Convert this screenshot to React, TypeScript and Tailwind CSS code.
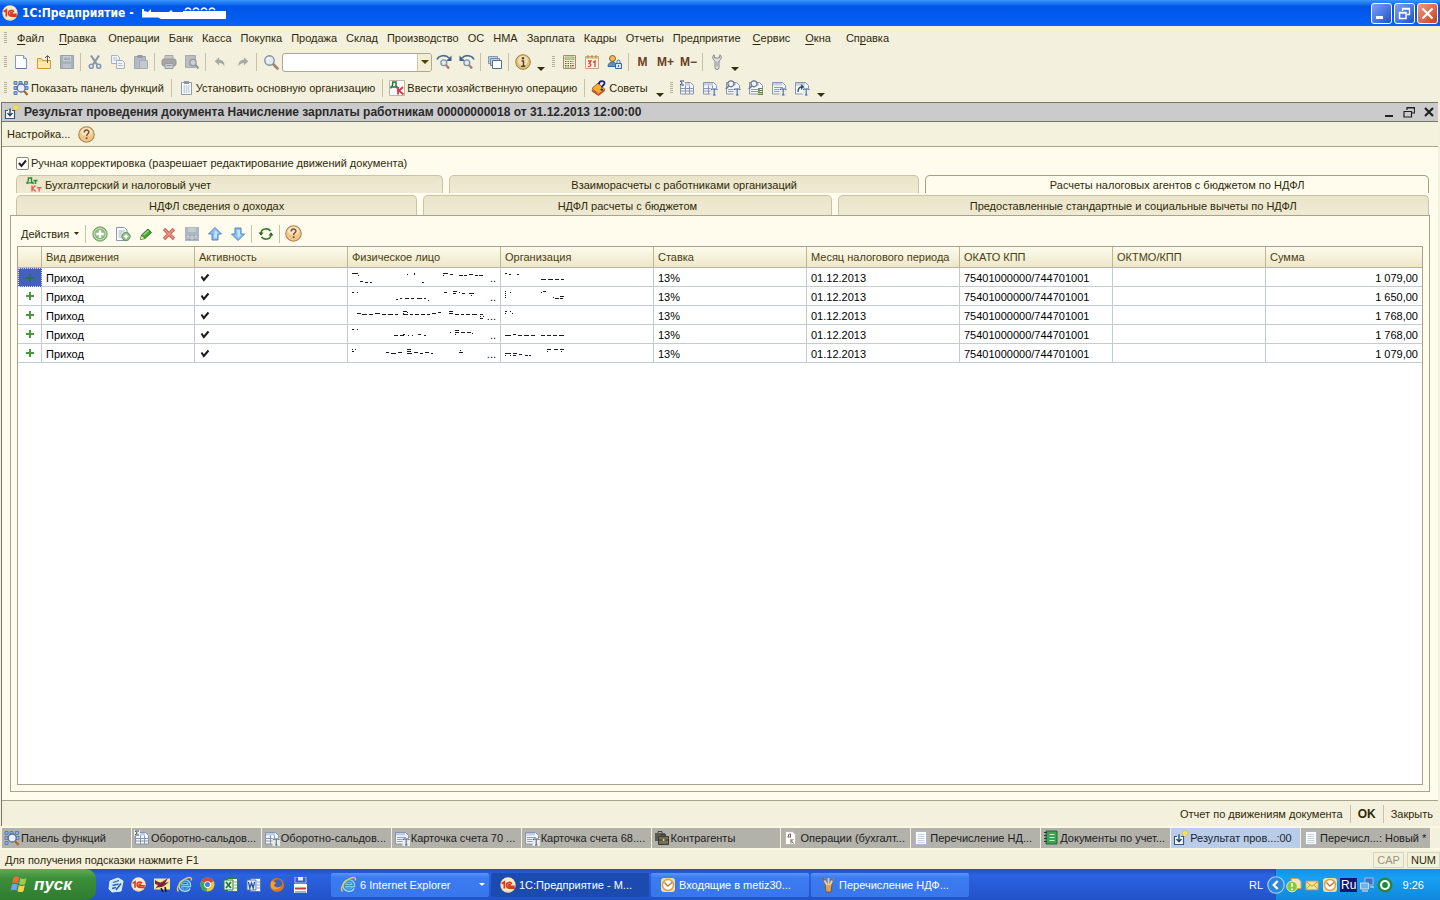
import React from "react";

type Kids = { children?: React.ReactNode };

/* ---------- icon building blocks ---------- */

const Ico = ({ children, size = 16 }: Kids & { size?: number }) => (
  <svg width={size} height={size} viewBox="0 0 16 16" fill="none" aria-hidden="true" className="shrink-0">
    {children}
  </svg>
);

const NewDoc = () => (
  <Ico>
    <path d="M2.500 1.500h8l3 3v10h-11z" fill="#fbfdff" stroke="#8a9bb5" />
    <path d="M10.500 1.500v3h3" fill="#dfe8f3" stroke="#8a9bb5" />
    <path d="M3 14.500h10.500" stroke="#5f7596" />
  </Ico>
);
const OpenFolder = () => (
  <Ico>
    <path d="M1.500 4.500h4l1 2h8v8h-13z" fill="#f9d98a" stroke="#c79a3c" />
    <path d="M2 8h12v6H2z" fill="#ffe9ae" />
    <path d="M11.500 9V2M9 4l2.500-2.500L14 4" stroke="#5f5a4a" />
  </Ico>
);
const Floppy = () => (
  <Ico>
    <path d="M1.500 1.500h13v13h-13z" fill="#a9b2bb" stroke="#98a2ac" />
    <path d="M4 2h8v5H4z" fill="#c9cfd4" />
    <path d="M4 10h8v4H4z" fill="#bcc4cb" />
    <path d="M5 4h6M5 5.500h6" stroke="#98a2ac" />
  </Ico>
);
const Scissors = () => (
  <Ico>
    <path d="M4 1.500l6 9M12 1.500l-6 9" stroke="#8b97a6" strokeWidth="2.200" />
    <circle cx="4.300" cy="12.300" r="2" stroke="#8496b5" strokeWidth="1.600" />
    <circle cx="11.700" cy="12.300" r="2" stroke="#8496b5" strokeWidth="1.600" />
  </Ico>
);
const CopyIco = () => (
  <Ico>
    <path d="M1.500 1.500h6l2 2v6h-8z" fill="#f2f4f6" stroke="#a5b3c4" />
    <path d="M3 4h4M3 6h5" stroke="#b4c0ce" />
    <path d="M6.500 6.500h6l2 2v6h-8z" fill="#f2f4f6" stroke="#a5b3c4" />
    <path d="M8 9.500h4M8 11.500h5" stroke="#b4c0ce" />
  </Ico>
);
const PasteIco = () => (
  <Ico>
    <path d="M1.500 2.500h11v12h-11z" fill="#b3bac1" stroke="#9ea7b0" />
    <path d="M4.500 1h5v3h-5z" fill="#9099a3" />
    <path d="M6.500 6.500h8v8h-8z" fill="#c3c9ce" stroke="#a4adb6" />
  </Ico>
);
const Printer = () => (
  <Ico>
    <path d="M4 1.500h8v5H4z" fill="#c9c9c9" stroke="#a9a9a9" />
    <rect x="1" y="5" width="14" height="7" rx="2" fill="#a6a6a8" stroke="#96969a" />
    <path d="M4 9.500h8v5H4z" fill="#cdcdcd" stroke="#9b9b9b" />
    <path d="M5.500 11.500h5" stroke="#9b9b9b" />
  </Ico>
);
const Preview = () => (
  <Ico>
    <path d="M1.500 1.500h10v12h-10z" fill="#bbbdc0" stroke="#a6a9ad" />
    <circle cx="9" cy="8.500" r="3.200" fill="#cfd1d4" stroke="#94989e" strokeWidth="1.300" />
    <path d="M11.500 11l3 3.500" stroke="#94989e" strokeWidth="2" />
  </Ico>
);
const Undo = () => (
  <Ico size={14}>
    <path d="M2 7l5-4.500v3c4 0 6.500 2.500 6 7.500-1.500-3-3-4-6-4v3z" fill="#a8a8a4" />
  </Ico>
);
const Redo = () => (
  <Ico size={14}>
    <path d="M14 7L9 2.500v3c-4 0-6.500 2.500-6 7.500 1.500-3 3-4 6-4v3z" fill="#a8a8a4" />
  </Ico>
);
const Magnifier = () => (
  <Ico>
    <path d="M10 10l4.500 4.500" stroke="#a87e73" strokeWidth="2.600" strokeLinecap="round" />
    <circle cx="6.500" cy="6.500" r="4.700" fill="#e3ecf4" stroke="#8590a0" strokeWidth="1.400" />
    <path d="M4 6a3 3 0 013-2" stroke="#fff" strokeWidth="1.200" />
  </Ico>
);
const FindNext = ({ back = false }: { back?: boolean }) => (
  <Ico>
    <g transform={back ? "matrix(-1 0 0 1 16 0)" : undefined}>
      <path d="M1 5.500C3 1 10 .5 13 4" stroke="#4d6f8f" strokeWidth="1.700" />
      <path d="M15.500 1.500v5.500H10z" fill="#3f6385" />
    </g>
    <path d="M10 11l3 3.500" stroke="#a87e73" strokeWidth="2.400" />
    <circle cx="7.800" cy="8.800" r="2.900" fill="#e3ecf4" stroke="#8590a0" strokeWidth="1.300" />
  </Ico>
);
const Windows = () => (
  <Ico>
    <path d="M1.500 2.500h9v7h-9z" fill="#c3d2e4" stroke="#7f98b8" />
    <path d="M3.500 4.500h9v7h-9z" fill="#c3d2e4" stroke="#6d87a8" />
    <path d="M5.500 6.500h9v8h-9z" fill="#fff" stroke="#4c6d97" />
  </Ico>
);
const InfoIco = () => (
  <Ico>
    <circle cx="8" cy="8" r="7.300" fill="#e3c07a" stroke="#9d7f45" />
    <circle cx="8" cy="6.800" r="5" fill="#f8e9c0" opacity=".7" />
    <path d="M6.500 7h2v5M6.200 12.200h4" stroke="#4d4636" strokeWidth="1.400" />
    <circle cx="8" cy="4.200" r="1.200" fill="#4d4636" />
  </Ico>
);
const Calc = () => (
  <Ico>
    <path d="M2.500 1.500h12v13h-12z" fill="#f6ecd0" stroke="#a58e62" />
    <path d="M4 3h9v2.500H4z" fill="#b9d79b" stroke="#7f9a60" strokeWidth=".6" />
    <path d="M4 7.500h8.500M4 9.500h8.500M4 11.500h8.500M4 13h8.500" stroke="#69704a" strokeWidth="1.200" strokeDasharray="1.500 1" />
    <path d="M11 11.500h1.500" stroke="#c33" />
  </Ico>
);
const CalendarIco = () => (
  <Ico>
    <path d="M1.500 2.500h13v12h-13z" fill="#fff4e0" stroke="#c9a577" />
    <path d="M2 3h12v2H2z" fill="#ecc794" />
    <path d="M4 1v3M8 1v3M12 1v3" stroke="#a97f55" />
    <path d="M4 7h3L5.200 9.500c2.500 0 2.300 3.500-1.400 3.200M9 8.500l2-1.500v6" stroke="#d8433a" strokeWidth="1.300" />
  </Ico>
);
const UserLock = () => (
  <Ico>
    <circle cx="5.500" cy="4.500" r="3" fill="#eeb95d" stroke="#80622e" />
    <path d="M1 12.500c0-3 2-4.500 4.500-4.500s4 1.500 4 4.500z" fill="#5d8fc9" stroke="#3e6797" />
    <path d="M8.500 9.500h6v5h-6z" fill="#dbe7f5" stroke="#3e6797" />
    <path d="M10 9V7.500a1.500 1.500 0 013 0V9" stroke="#3e6797" />
    <path d="M11.500 11v2" stroke="#3e6797" />
  </Ico>
);
const Wrench = () => (
  <Ico>
    <path
      d="M5 .8c-2 1.800-1.500 4.800 1 6v6.700a2 2 0 004 0V6.800c2.500-1.200 3-4.200 1-6L10.200 4H5.800z"
      fill="#e2e2e2"
      stroke="#858585"
    />
    <path d="M8 7.500v5" stroke="#8d8d8d" />
  </Ico>
);
const PanelFn = () => (
  <Ico>
    <path
      d="M1 1.500h3v3H1zM6 1.500h3v3H6zM11.500 1.500h3v3h-3zM1 6.500h3v3H1zM1 11.500h3v3H1zM12 6.500h3v3h-3z"
      fill="#8eb0df"
      stroke="#5a80b8"
    />
    <circle cx="8.200" cy="8" r="4" fill="#e6f0fb" stroke="#5b6f92" strokeWidth="1.300" />
    <path d="M11 11l3.500 4" stroke="#a8663a" strokeWidth="2.200" />
  </Ico>
);
const OrgIco = () => (
  <Ico>
    <path d="M3.500 2.500h10v12h-10z" fill="#fbfcfe" stroke="#8c99b0" />
    <path d="M6 1h5v3H6z" fill="#8a97ac" />
    <path d="M5.500 6h6M5.500 8h6M5.500 10h6M5.500 12h6" stroke="#8fa2be" strokeDasharray="1.500 .8" />
  </Ico>
);
const DkIco = () => (
  <Ico>
    <path d="M.5.500h15v15H.500z" fill="#fff" stroke="#bdb7a1" />
    <path d="M2 8.500V7h.8c.9-1.500 1-3 1-5H7v5h1v1.500M3 7h4" stroke="#22773c" strokeWidth="1.500" />
    <path d="M9 7v7.500M14 7l-4 3.800 4.500 3.700" stroke="#d8344a" strokeWidth="1.800" />
  </Ico>
);
const TipsIco = () => (
  <Ico>
    <path d="M1 8.500l6-5.500 7 6.500L7.500 14z" fill="#f6ab33" stroke="#a25d12" />
    <path d="M.8 9v2.500L7.500 16l6.500-5v-1.500L7.500 14.200z" fill="#c4532b" />
    <path d="M8 4.200C8 .3 13.500.3 13.500 3.200c0 2.200-2.700 2-2.700 4.300" stroke="#1e1f8d" strokeWidth="1.900" />
    <circle cx="10.800" cy="9.600" r="1.200" fill="#1e1f8d" />
  </Ico>
);
const SheetBase = () => (
  <>
    <path d="M1.500 2.500h10l3 3v8.500h-13z" fill="#f4f6fb" stroke="#8795b2" />
    <path d="M2 3h9v2.500H2z" fill="#c3cee2" />
  </>
);
const LetterT = () => (
  <>
    <path d="M8.500 8H16v8H8.500z" fill="#eeece2" />
    <path d="M9.500 10V9h5.500v1M12.200 9v6M11 15h2.500" stroke="#3a6298" />
  </>
);
const SigmaSheet = () => (
  <Ico>
    <SheetBase />
    <path d="M6.500 5.500v8.500M10.500 5.500v8.500M2 8.500h12M2 11h12" stroke="#8795b2" />
    <path d="M0 0h6v6H0z" fill="#efeddf" />
    <path d="M5 1H1.200L3.200 3 1.200 5H5" stroke="#2e4f7c" />
  </Ico>
);
const TableT = () => (
  <Ico>
    <SheetBase />
    <path d="M6.500 5.500v8.500M10.500 5.500v8.500M2 8.500h12M2 11h12" stroke="#8795b2" />
    <LetterT />
  </Ico>
);
const LinesT = () => (
  <Ico>
    <SheetBase />
    <path d="M3 7.500h9M3 9.500h9M3 11.500h9" stroke="#8a9dbb" />
    <LetterT />
  </Ico>
);
const LensT = ({ plain = false }: { plain?: boolean }) => (
  <Ico>
    <SheetBase />
    <path d="M3 9.500h9M3 11.500h9" stroke="#8a9dbb" />
    {plain ? <path d="M10 8.500h5M10 10.500h5M10 12.500h5M10 14.500h5" stroke="#6d8068" /> : <LetterT />}
    <circle cx="6" cy="3.800" r="3" fill="#edf3f8" stroke="#6d7787" strokeWidth="1.200" />
    <path d="M3.800 6L.8 9" stroke="#6d7787" strokeWidth="1.600" />
  </Ico>
);
const ArrowT = () => (
  <Ico>
    <SheetBase />
    <path d="M4 12c0-4 2-5 4-5" stroke="#35506f" strokeWidth="1.300" />
    <path d="M7 4l3.500 3L7 10z" fill="#35506f" />
    <LetterT />
  </Ico>
);
const ResultIco = () => (
  <Ico>
    <path d="M4 6.500H1.500v8h9v-8H8" fill="#fff" stroke="#35577d" strokeWidth="1.200" />
    <path d="M6 4.500v6.500M3.500 9L6 11.800 8.500 9" stroke="#24466d" strokeWidth="1.400" />
    <path d="M12 0l3.500 3.500L12 7 8.500 3.500z" fill="#f3dc63" stroke="#d3bb50" strokeWidth=".7" />
  </Ico>
);
const HelpIco = () => (
  <Ico size={17}>
    <circle cx="8" cy="8" r="7.300" fill="#f3c68c" stroke="#ad8450" />
    <ellipse cx="8" cy="5.500" rx="5.500" ry="3.800" fill="#fdebd0" opacity=".8" />
    <path d="M5.900 6c0-2.800 4.400-2.800 4.400-.3 0 1.700-2.200 1.700-2.200 3.600" stroke="#7b5a32" strokeWidth="1.400" />
    <circle cx="8.100" cy="11.500" r="1" fill="#7b5a32" />
  </Ico>
);
const AddIco = () => (
  <Ico>
    <circle cx="8" cy="8" r="7.200" fill="#8fbb84" stroke="#76a06c" />
    <circle cx="8" cy="8" r="5.800" stroke="#c4dfb8" />
    <path d="M8 4.200v7.600M4.200 8h7.600" stroke="#fff" strokeWidth="2.400" />
  </Ico>
);
const AddCopy = () => (
  <Ico>
    <path d="M1.500 1.500h8l2.500 2.500v10.500H1.500z" fill="#f8fbff" stroke="#8598b5" />
    <path d="M3.500 5h6M3.500 7h4M3.500 9h3M3.500 11h3" stroke="#a3b4cc" />
    <circle cx="11" cy="10.500" r="4.200" fill="#8fbb84" stroke="#6b955f" />
    <path d="M11 8.200v4.600M8.700 10.500h4.600" stroke="#fff" strokeWidth="1.500" />
  </Ico>
);
const Pencil = () => (
  <Ico>
    <path d="M2.500 13.500l1-4.500 6.500-6 3.500 3.500-6.500 6z" fill="#4ba53a" stroke="#2b7323" />
    <path d="M2.500 13.500l1-3.500 2.800 2.500z" fill="#f4e5b8" />
    <path d="M5.500 9l5-4.500" stroke="#9bdb86" strokeWidth="1.300" />
  </Ico>
);
const DeleteIco = () => (
  <Ico>
    <path d="M3 3l10 10M13 3L3 13" stroke="#cf5d50" strokeWidth="3.200" />
    <path d="M3.500 3.500l9 9M12.500 3.500l-9 9" stroke="#f09a8c" strokeWidth="1.200" />
  </Ico>
);
const PostIco = () => (
  <Ico>
    <path d="M1 1h14v14H1z" fill="#aeb6c0" />
    <path d="M4 2h8v4H4z" fill="#c6ccd3" />
    <path d="M2 9h12v5H2z" fill="#98a3b0" />
    <path d="M3 13v-3h2v3M7 10h2v3H7zM11 13v-3h2v3" stroke="#dde1e6" strokeWidth=".9" />
  </Ico>
);
const ArrowBlue = ({ down = false }: { down?: boolean }) => (
  <Ico>
    <g transform={down ? "matrix(1 0 0 -1 0 16)" : undefined}>
      <path d="M8 1.500l6.500 6.500H11v6H5V8H1.500z" fill="#8ec0ec" stroke="#4b86bc" />
      <path d="M8 4l3.500 3.500H10V12H7z" fill="#c4e2fa" />
    </g>
  </Ico>
);
const Refresh = () => (
  <Ico>
    <path d="M3 7c.5-4.500 7-5.500 9.500-2M13 9c-.5 4.500-7 5.500-9.500 2" stroke="#3d7b32" strokeWidth="1.700" />
    <path d="M.5 6.500h5L3 9.800zM15.500 9.500h-5L13 6.200z" fill="#2d6425" />
  </Ico>
);
const DtKt = () => (
  <svg width="16" height="15" viewBox="0 0 16 15" fill="none" aria-hidden="true" className="shrink-0">
    <path d="M1 7V5.700c1-.8 1.500-2 1.500-4.700h3v4.500H7V7M1 5.900h6M4 1h2" stroke="#2c8a35" strokeWidth="1.400" />
    <path d="M7.500 3.500h4M9.500 3.500V7" stroke="#2c8a35" strokeWidth="1.500" />
    <path d="M6 8.500v6M9.500 8.500l-3 3 3.300 3M10.800 10.700h4.700M13.200 10.700v3.800" stroke="#e0685e" strokeWidth="1.500" />
  </svg>
);
const Case = () => (
  <Ico>
    <path d="M1 3h10v8H1z" fill="#5c5a4c" />
    <path d="M4 3V1.500h4V3" stroke="#45443a" />
    <path d="M4.500 6.500h10v8h-10z" fill="#726f5b" stroke="#3f3d33" />
    <path d="M7.500 6V4.500h4V6M5 10h9" stroke="#3f3d33" />
    <path d="M8.800 9h1.600v2H8.800z" fill="#d9cf92" />
  </Ico>
);
const DkDoc = () => (
  <Ico>
    <path d="M2.500 1.500h7l3 3v10h-10z" fill="#fff" stroke="#b9b9b0" />
    <path d="M5 7l1-3h1.500v3M4.500 7H8M8 9v4.500M10.500 9L8.500 11l2 2.500" stroke="#8a5a50" />
  </Ico>
);
const LinesDoc = () => (
  <Ico>
    <path d="M2.500 1.500h11v13h-11z" fill="#fff" stroke="#a9b7cc" />
    <path d="M4.500 4.500h7M4.500 6.500h7M4.500 8.500h7M4.500 10.500h7M4.500 12.500h7" stroke="#c3cfe0" />
  </Ico>
);
const GreenBook = () => (
  <Ico>
    <path d="M3 1h11v13H3z" fill="#3fa256" stroke="#1f6a35" />
    <path d="M1 2.500h3M1 5.500h3M1 8.500h3M1 11.500h3" stroke="#333" />
    <path d="M6.500 4.500h5M6.500 7.500h5M6.500 10.500h5" stroke="#c7ecd0" />
  </Ico>
);
const OneC = ({ size = 16 }: { size?: number }) => (
  <Ico size={size}>
    <circle cx="8" cy="8" r="7.700" fill="#f9dcae" />
    <circle cx="8" cy="7.500" r="6.500" fill="#fdeccb" />
    <path
      d="M1.800 6.800L4.300 5v6.500M11.800 6.800c-1-2-5.300-1.800-5.300 1.300 0 2.700 2.200 3.100 3.800 3.100h4.500M10.800 8.200c-.9-.9-2.200-.6-2.200.3 0 .7.700.9 1.600.9h4.500"
      stroke="#d9391f"
      strokeWidth="1.700"
    />
  </Ico>
);
const IeIco = () => (
  <Ico size={17}>
    <path d="M4 9h8.800c.3-6-8.800-6-9 0 0 5 6.800 6 8.700 2.300" stroke="#a6ddff" strokeWidth="3" />
    <path d="M4 9h8.600c.3-5.500-8.300-5.700-8.600 0 .2 4.500 6.300 5.500 8.200 2.200" stroke="#2f8fdc" strokeWidth="1.500" />
    <path d="M2.500 14.500C-1 13 4 4.500 9.500 2.200 12.500.9 15.500 1 14.300 4.200" stroke="#f1c84b" strokeWidth="1.300" />
  </Ico>
);
const OutlookIco = () => (
  <Ico>
    <rect x="1" y="1" width="14" height="14" rx="3" fill="#f3dc9d" />
    <circle cx="8" cy="8" r="5.500" fill="#fff" stroke="#dca04e" strokeWidth="1.500" />
    <path d="M4.500 5.500l3.300 3.500L12 5.500" stroke="#c07a2a" strokeWidth="1.400" />
  </Ico>
);
const BrushIco = () => (
  <Ico>
    <path d="M5 7h7l-1 8H6z" fill="#d9a066" stroke="#7a4a20" strokeWidth=".8" />
    <path d="M3.500 1.500L7 8M8.500 1v7M13 1.500L10 8" stroke="#f4cf83" strokeWidth="1.800" />
    <path d="M3 1l1.500 2.500M12.800 1.500l-1 2" stroke="#a8502d" strokeWidth="2" />
  </Ico>
);

/* Quick-launch drawings */
const DesktopIco = () => (
  <Ico>
    <path d="M2 4l8-3 5 3-2 10-9 1-3-3z" fill="#cfe8fb" stroke="#e8f5ff" />
    <path d="M5 5.500l6-2M4.500 8.500l6-1.500M4 11.500l4-1" stroke="#2f62ad" strokeWidth="1.300" />
    <path d="M8 13l5-6.500" stroke="#2f62ad" strokeWidth="1.600" />
  </Ico>
);
const BatIco = () => (
  <Ico>
    <path d="M0 1.500h16v11H0z" fill="#f6e79a" />
    <path d="M1 3c3 2 5 3 7 2l6-4-3 5 4-1-5 4c-3 2-5 0-9 3l3-4-3-1z" fill="#7e2240" />
    <path d="M7 11l2 4M11 10l1 5" stroke="#111" strokeWidth="1.500" />
  </Ico>
);
const ChromeIco = () => (
  <Ico size={15}>
    <circle cx="8" cy="8" r="7.500" fill="#e7c93c" />
    <path d="M8 8L1.500 4.200A7.500 7.500 0 0114.500 4.200z" fill="#d8453a" />
    <path d="M8 8L1.500 4.200A7.500 7.500 0 007 15.400z" fill="#3fa653" />
    <circle cx="8" cy="8" r="3.600" fill="#fff" />
    <circle cx="8" cy="8" r="2.700" fill="#4583dc" />
  </Ico>
);
const ExcelIco = () => (
  <Ico>
    <path d="M4.500 1.500h10v13h-10z" fill="#fff" stroke="#2f7f3c" />
    <path d="M1 3h9v10H1z" fill="#e6f4e2" stroke="#2f7f3c" />
    <path d="M3 5l5 6M8 5l-5 6" stroke="#22792f" strokeWidth="1.800" />
    <path d="M11 5h3M11 8h3M11 11h3" stroke="#69a870" />
  </Ico>
);
const WordIco = () => (
  <Ico>
    <path d="M4.500 1.500h10v13h-10z" fill="#fff" stroke="#5678bb" />
    <path d="M1 3h9v10H1z" fill="#eaf1fc" stroke="#5678bb" />
    <path d="M2.500 5l1.300 6L5.500 6l1.700 5L8.500 5" stroke="#2b52a3" strokeWidth="1.300" />
    <path d="M11 5h3M11 8h3M11 11h3" stroke="#7d98cd" />
  </Ico>
);
const FirefoxIco = () => (
  <Ico>
    <circle cx="8" cy="8" r="7" fill="#e0701d" />
    <circle cx="8.800" cy="6.500" r="4.300" fill="#3b62b5" />
    <path d="M2 5c2-2 4 0 5 1l-2 2c1 3 5 3 7 1-1 4-8 5-10 1z" fill="#f3a02d" />
  </Ico>
);
const CommanderIco = () => (
  <Ico>
    <path d="M3 0h11v6H3z" fill="#3d5fbf" stroke="#a8b9ea" />
    <path d="M6 0h5v3.500H6z" fill="#e7edfa" />
    <path d="M2 7h13v9H2z" fill="#fff" />
    <path d="M3 11.500h11" stroke="#cf3540" strokeWidth="2" />
    <path d="M3 15h11" stroke="#3d5fbf" />
  </Ico>
);
const WinFlag = () => (
  <svg width="20" height="19" viewBox="0 0 20 19" aria-hidden="true" className="shrink-0">
    <path d="M3.500 2.500c2-1.300 3.800-1.200 5.700 0L8 8.500C6.200 7.300 4.300 7.300 2.200 8.400z" fill="#ee6b3a" />
    <path d="M10.300 3c2 1.200 4 1.200 6.200 0l-1.400 6c-2 1.200-4 1.100-6 0z" fill="#9ace4c" />
    <path d="M2 9.500c2-1.200 3.900-1.100 5.700 0l-1.300 6C4.700 14.300 3 14.400.7 15.500z" fill="#6ea4ef" />
    <path d="M8.800 10.200c2 1.100 4 1.100 6 0l-1.300 6c-2 1.200-4 1.200-6 0z" fill="#f9cf45" />
  </svg>
);

/* Tray drawings */
const TrayArrow = () => (
  <Ico size={18}>
    <circle cx="8" cy="8" r="7.300" fill="#2d86dd" stroke="#a9d3f8" />
    <path d="M9.500 4.500L6 8l3.500 3.500" stroke="#fff" strokeWidth="2" />
  </Ico>
);
const TrayShield = () => (
  <Ico>
    <path d="M5 1.500h7l3 3v7H8z" fill="#f6e3bd" stroke="#c9a75e" />
    <circle cx="6" cy="9.500" r="5.300" fill="#8cc63c" stroke="#dff2c0" />
    <path d="M6 6v4M6 11.500v1.500" stroke="#fff" strokeWidth="1.600" />
  </Ico>
);
const TrayMail = () => (
  <Ico size={14}>
    <path d="M1 3.500h14v10H1z" fill="#fbe49a" stroke="#d79c2f" />
    <path d="M1 4l7 5.500L15 4M1 13l5-5M15 13l-5-5" stroke="#c98b25" />
  </Ico>
);
const TrayNet = () => (
  <Ico>
    <path d="M6 1h8v7H6z" fill="#3f73c0" stroke="#a9bce0" />
    <path d="M1.500 6h8v6h-8z" fill="#6fb2f3" stroke="#d6d9e4" />
    <path d="M3 14h6M11 10h4" stroke="#b9c6dd" strokeWidth="1.500" />
  </Ico>
);
const TrayEye = () => (
  <Ico>
    <circle cx="8" cy="8" r="7.500" fill="#2d8545" />
    <circle cx="8" cy="8" r="5" fill="#f0fff0" />
    <circle cx="8" cy="8" r="2.900" fill="#1b8a43" />
  </Ico>
);

/* ---------- toolbar parts ---------- */

const Grip = () => (
  <span className="flex w-[8px] shrink-0 justify-center">
    <svg width="3" height="12" viewBox="0 0 3 12" aria-hidden="true">
      <path d="M1.500 0v12" stroke="#b5b098" strokeWidth="3" strokeDasharray="1 1" />
    </svg>
  </span>
);
const Sep = () => (
  <span className="flex h-[18px] w-[5px] shrink-0 justify-center">
    <span className="w-px bg-[#c9c2a4]" />
  </span>
);
const IconBtn = ({ label, children }: Kids & { label: string }) => (
  <button type="button" aria-label={label} className="flex h-[20px] w-[23px] shrink-0 items-center justify-center">
    {children}
  </button>
);
const More = () => (
  <button type="button" aria-label="Ещё" className="flex h-[20px] w-[14px] shrink-0 items-end justify-center pb-px">
    <svg width="8" height="4" viewBox="0 0 8 4" aria-hidden="true">
      <path d="M0 0h8L4 4z" fill="#33300c" />
    </svg>
  </button>
);
const TextBtn = ({ icon, children }: Kids & { icon: React.ReactNode }) => (
  <button type="button" className="flex h-[20px] shrink-0 items-center gap-[2px] pr-[5px] pl-[4px] whitespace-nowrap">
    {icon}
    <span>{children}</span>
  </button>
);

/* ---------- data ---------- */

const MENU: { text: string; key?: number; wide?: boolean }[] = [
  { text: "Файл", key: 0, wide: true },
  { text: "Правка", key: 0, wide: true },
  { text: "Операции" },
  { text: "Банк" },
  { text: "Касса" },
  { text: "Покупка" },
  { text: "Продажа" },
  { text: "Склад" },
  { text: "Производство" },
  { text: "ОС" },
  { text: "НМА" },
  { text: "Зарплата" },
  { text: "Кадры" },
  { text: "Отчеты" },
  { text: "Предприятие" },
  { text: "Сервис", key: 0, wide: true },
  { text: "Окна", key: 0, wide: true },
  { text: "Справка", key: 2, wide: true },
];

const COLUMNS = [
  "Вид движения",
  "Активность",
  "Физическое лицо",
  "Организация",
  "Ставка",
  "Месяц налогового периода",
  "ОКАТО КПП",
  "ОКТМО/КПП",
  "Сумма",
];

type Row = { sum: string; person: string; dots: string; org: string };

/* Remains of wiped-out cell values: short horizontal marks. */
const ROWS: Row[] = [
  {
    sum: "1 079,00",
    person:
      "M0 3h6M6 5h1M8 11h3M13 12h3M18 12h2M55 4h1M62 3h1M62 4h1M70 12h2M91 3h5M91 5h1M98 4h3M107 5h4M112 5h3M117 4h4M123 5h3M127 5h4",
    dots: "..",
    org: "M0 3h2M4 4h2M12 4h2M36 9h5M43 9h5M50 9h4M56 9h3",
  },
  {
    sum: "1 650,00",
    person:
      "M0 3h2M5 3h1M44 10h2M48 9h2M53 9h4M59 9h3M65 9h5M72 9h2M76 11h1M92 3h3M101 2h4M101 4h3M107 3h1M110 4h3M117 4h5M119 6h1",
    dots: "..",
    org: "M0 2h1M0 4h1M0 6h1M0 8h1M5 3h1M36 3h1M38 2h3M48 8h1M50 9h4M55 7h4M55 9h3",
  },
  {
    sum: "1 768,00",
    person:
      "M5 5h4M10 6h5M17 6h4M23 5h5M30 6h4M36 6h5M43 6h3M51 3h4M51 5h1M55 4h1M51 6h5M58 6h3M63 6h4M69 6h4M75 6h3M80 5h4M86 4h3M97 3h4M97 5h4M103 6h4M109 6h3M114 6h4M120 6h5M128 6h3M128 8h1M131 8h1M128 10h3",
    dots: "...",
    org: "M0 3h2M0 5h1M5 3h1M7 5h1",
  },
  {
    sum: "1 768,00",
    person:
      "M0 2h2M5 2h1M42 8h4M48 8h4M51 7h2M56 8h1M60 8h1M66 7h3M72 8h2M98 5h1M103 3h4M103 5h4M103 7h1M109 5h4M115 5h4M120 6h1",
    dots: "..",
    org: "M0 8h6M8 7h3M13 8h4M19 8h5M26 8h4M36 8h4M42 8h4M48 8h4M54 8h5",
  },
  {
    sum: "1 079,00",
    person:
      "M0 3h1M0 5h2M3 3h1M34 6h3M39 7h5M46 6h4M55 3h4M55 5h4M55 7h5M62 6h4M68 7h3M73 6h4M79 7h2M108 4h1M107 6h4",
    dots: "...",
    org: "M0 7h6M0 9h1M5 9h1M8 7h4M8 9h3M14 8h3M20 9h3M24 9h2M42 3h4M49 3h4M55 3h4M42 5h1M56 5h1",
  },
];

const WINDOW_TABS: { text: string; icon: React.ReactNode; active?: boolean }[] = [
  { text: "Панель функций", icon: <PanelFn /> },
  { text: "Оборотно-сальдов...", icon: <SigmaSheet /> },
  { text: "Оборотно-сальдов...", icon: <TableT /> },
  { text: "Карточка счета 70 ...", icon: <LinesT /> },
  { text: "Карточка счета 68....", icon: <LinesT /> },
  { text: "Контрагенты", icon: <Case /> },
  { text: "Операции (бухгалт...", icon: <DkDoc /> },
  { text: "Перечисление НД...", icon: <LinesDoc /> },
  { text: "Документы по учет...", icon: <GreenBook /> },
  { text: "Результат пров...:00", icon: <ResultIco />, active: true },
  { text: "Перечисл...: Новый *", icon: <LinesDoc /> },
];

const TASKS: { text: string; icon: React.ReactNode; active?: boolean; group?: boolean }[] = [
  { text: "6 Internet Explorer", icon: <IeIco />, group: true },
  { text: "1С:Предприятие - М...", icon: <OneC />, active: true },
  { text: "Входящие в metiz30...", icon: <OutlookIco /> },
  { text: "Перечисление НДФ...", icon: <BrushIco /> },
];

const Marks = ({ d }: { d: string }) => (
  <svg width="134" height="14" viewBox="0 0 134 14" aria-hidden="true" className="block shrink-0">
    <path d={d} stroke="#1a1a1a" strokeWidth="1" transform="translate(0 -.5)" />
  </svg>
);

/* ---------- page sections ---------- */

const TitleBar = () => (
  <header className="flex h-[26px] shrink-0 items-center bg-linear-to-b from-[#3a95fb] via-[#0054e6] via-25% to-[#0562f8] pr-[2px] pl-[2px] text-white">
    <OneC />
    <h1 className="ml-[4px] font-['DejaVu_Sans_Condensed','Liberation_Sans',sans-serif] text-[12px] font-bold whitespace-nowrap">
      1С:Предприятие -
    </h1>
    <svg width="84" height="12" viewBox="0 0 84 12" aria-hidden="true" className="ml-[8px]">
      <path d="M0 2h2v2l4 1 3-3v3h18l2-2 2 2h10v-1h43v8h-65l-3-1.500H0z" fill="#fff" />
      <path d="M43 3q3-4 6 0M51 3q3-4 6 0M59 3q3-4 6 0M67 3q3-4 6 0" stroke="#fff" strokeWidth="1.300" fill="none" />
    </svg>
    <div className="ml-auto flex gap-[2px]">
      <button
        type="button"
        aria-label="Свернуть"
        className="flex size-[21px] items-center justify-center rounded-[3px] border border-white bg-linear-to-br from-[#7ba2f2] to-[#1c50cf]"
      >
        <svg width="13" height="13" viewBox="0 0 13 13" aria-hidden="true">
          <path d="M1 9h7v3H1z" fill="#fff" />
        </svg>
      </button>
      <button
        type="button"
        aria-label="Восстановить"
        className="flex size-[21px] items-center justify-center rounded-[3px] border border-white bg-linear-to-br from-[#7ba2f2] to-[#1c50cf]"
      >
        <svg width="13" height="13" viewBox="0 0 13 13" fill="none" aria-hidden="true">
          <path d="M4.500 4V1.500h7v6H9M4 2h8" stroke="#fff" strokeWidth="1.300" />
          <path d="M1.500 5.500h6.500v6H1.500zM1.500 6h6.500" stroke="#fff" strokeWidth="1.500" />
        </svg>
      </button>
      <button
        type="button"
        aria-label="Закрыть окно"
        className="flex size-[21px] items-center justify-center rounded-[3px] border border-white bg-linear-to-br from-[#ee9a80] to-[#c93a12]"
      >
        <svg width="13" height="13" viewBox="0 0 13 13" aria-hidden="true">
          <path d="M1.500 1.500l10 10M11.500 1.500l-10 10" stroke="#fff" strokeWidth="2.200" />
        </svg>
      </button>
    </div>
  </header>
);

const MenuBar = () => (
  <nav className="flex h-[24px] shrink-0 items-center gap-px pl-px">
    <Grip />
    {MENU.map((m) => (
      <button
        key={m.text}
        type="button"
        className={m.wide ? "px-[7px] whitespace-nowrap" : "px-[4px] whitespace-nowrap"}
      >
        {m.key === undefined ? (
          m.text
        ) : (
          <>
            {m.text.slice(0, m.key)}
            <span className="underline underline-offset-2">{m.text[m.key]}</span>
            {m.text.slice(m.key + 1)}
          </>
        )}
      </button>
    ))}
  </nav>
);

const MainToolbar = () => (
  <div className="flex h-[24px] shrink-0 items-center pl-px">
    <Grip />
    <IconBtn label="Новый документ"><NewDoc /></IconBtn>
    <IconBtn label="Открыть"><OpenFolder /></IconBtn>
    <IconBtn label="Сохранить"><Floppy /></IconBtn>
    <Sep />
    <IconBtn label="Вырезать"><Scissors /></IconBtn>
    <IconBtn label="Копировать"><CopyIco /></IconBtn>
    <IconBtn label="Вставить"><PasteIco /></IconBtn>
    <Sep />
    <IconBtn label="Печать"><Printer /></IconBtn>
    <IconBtn label="Просмотр"><Preview /></IconBtn>
    <Sep />
    <IconBtn label="Отменить"><Undo /></IconBtn>
    <IconBtn label="Вернуть"><Redo /></IconBtn>
    <Sep />
    <IconBtn label="Найти"><Magnifier /></IconBtn>
    <div className="flex h-[19px] w-[150px] shrink-0 rounded-[3px] border border-[#b0a986] bg-white">
      <input type="text" aria-label="Строка поиска" className="min-w-0 flex-1 bg-transparent px-[3px] outline-none" />
      <button
        type="button"
        aria-label="Список поиска"
        className="flex w-[14px] items-center justify-center rounded-r-[3px] border-l border-[#cfc8a6] bg-[#f3efd6]"
      >
        <svg width="8" height="4" viewBox="0 0 8 4" aria-hidden="true">
          <path d="M0 0h8L4 4z" fill="#4d4400" />
        </svg>
      </button>
    </div>
    <IconBtn label="Найти далее"><FindNext /></IconBtn>
    <IconBtn label="Найти ранее"><FindNext back /></IconBtn>
    <Sep />
    <IconBtn label="Окна"><Windows /></IconBtn>
    <Sep />
    <IconBtn label="Информация"><InfoIco /></IconBtn>
    <More />
    <span className="w-px" />
    <Grip />
    <IconBtn label="Калькулятор"><Calc /></IconBtn>
    <IconBtn label="Календарь"><CalendarIco /></IconBtn>
    <IconBtn label="Пользователь"><UserLock /></IconBtn>
    <Sep />
    <button type="button" className="w-[23px] text-[12px] font-bold text-[#6b3d1e]">M</button>
    <button type="button" className="w-[23px] text-[12px] font-bold text-[#6b3d1e]">M+</button>
    <button type="button" className="w-[23px] text-[12px] font-bold text-[#6b3d1e]">M−</button>
    <Sep />
    <IconBtn label="Настройки"><Wrench /></IconBtn>
    <More />
  </div>
);

const FunctionToolbar = () => (
  <div className="flex h-[28px] shrink-0 items-center pl-px">
    <Grip />
    <TextBtn icon={<PanelFn />}>Показать панель функций</TextBtn>
    <Sep />
    <TextBtn icon={<OrgIco />}>Установить основную организацию</TextBtn>
    <Sep />
    <TextBtn icon={<DkIco />}>Ввести хозяйственную операцию</TextBtn>
    <Sep />
    <TextBtn icon={<TipsIco />}>Советы</TextBtn>
    <More />
    <span className="w-px" />
    <Grip />
    <IconBtn label="Оборотно-сальдовая ведомость"><SigmaSheet /></IconBtn>
    <IconBtn label="Ведомость по счету"><TableT /></IconBtn>
    <IconBtn label="Анализ счета"><LensT /></IconBtn>
    <IconBtn label="Анализ субконто"><LensT plain /></IconBtn>
    <IconBtn label="Карточка счета"><LinesT /></IconBtn>
    <IconBtn label="Обороты счета"><ArrowT /></IconBtn>
    <More />
  </div>
);

const DocTitle = () => (
  <div className="flex h-[20px] shrink-0 items-center border-y border-[#77756c] bg-[#cbcbcb] pr-[3px] pl-[2px]">
    <ResultIco />
    <h2 className="ml-[4px] text-[12px] font-bold whitespace-nowrap text-[#2a2a2a]">
      Результат проведения документа Начисление зарплаты работникам 00000000018 от 31.12.2013 12:00:00
    </h2>
    <div className="ml-auto flex items-center gap-[8px]">
      <button type="button" aria-label="Свернуть документ">
        <svg width="12" height="12" viewBox="0 0 12 12" aria-hidden="true">
          <path d="M2 9h8v2H2z" fill="#222" />
        </svg>
      </button>
      <button type="button" aria-label="Развернуть документ">
        <svg width="12" height="12" viewBox="0 0 12 12" fill="none" aria-hidden="true">
          <path d="M4 4V1.500h7.500V7H9M4 2h7.500M1 5.500h7.500v5.500H1zM1 5.500h7" stroke="#222" strokeWidth="1.200" />
        </svg>
      </button>
      <button type="button" aria-label="Закрыть документ">
        <svg width="12" height="12" viewBox="0 0 12 12" aria-hidden="true">
          <path d="M2 2l8 8M10 2l-8 8" stroke="#222" strokeWidth="2.200" />
        </svg>
      </button>
    </div>
  </div>
);

const TAB =
  "flex items-center rounded-t-[5px] border border-b-0 border-[#cbc4a4] bg-linear-to-b from-[#e9e4c9] to-[#efead3] whitespace-nowrap";

const DocTabs = () => (
  <div role="tablist" className="mr-px flex flex-col gap-[2px] pl-[6px]">
    <div className="flex h-[18px] gap-[6px]">
      <button type="button" role="tab" aria-selected="false" className={`${TAB} flex-[427_1_0%]`}>
        <span className="flex items-center gap-[3px] pl-[9px]">
          <DtKt />
          Бухгалтерский и налоговый учет
        </span>
      </button>
      <button type="button" role="tab" aria-selected="false" className={`${TAB} flex-[470_1_0%] justify-center`}>
        Взаиморасчеты с работниками организаций
      </button>
      <button
        type="button"
        role="tab"
        aria-selected="true"
        className="flex flex-[504_1_0%] items-center justify-center rounded-t-[5px] border border-b-0 border-[#a5a07f] bg-[#fffcee] whitespace-nowrap"
      >
        Расчеты налоговых агентов с бюджетом по НДФЛ
      </button>
    </div>
    <div className="flex h-[20px] gap-[6px]">
      <button type="button" role="tab" aria-selected="false" className={`${TAB} flex-[401_1_0%] justify-center`}>
        НДФЛ сведения о доходах
      </button>
      <button type="button" role="tab" aria-selected="false" className={`${TAB} flex-[408_1_0%] justify-center`}>
        НДФЛ расчеты с бюджетом
      </button>
      <button type="button" role="tab" aria-selected="false" className={`${TAB} flex-[592_1_0%] justify-center`}>
        Предоставленные стандартные и социальные вычеты по НДФЛ
      </button>
    </div>
  </div>
);

const TableToolbar = () => (
  <div className="flex h-[30px] shrink-0 items-center pt-[5px]">
    <button type="button" className="flex items-center gap-[5px] px-[4px]">
      Действия
      <svg width="5" height="3" viewBox="0 0 5 3" aria-hidden="true">
        <path d="M0 0h5L2.500 3z" fill="#33300c" />
      </svg>
    </button>
    <Sep />
    <IconBtn label="Добавить"><AddIco /></IconBtn>
    <IconBtn label="Добавить копированием"><AddCopy /></IconBtn>
    <IconBtn label="Изменить"><Pencil /></IconBtn>
    <IconBtn label="Удалить"><DeleteIco /></IconBtn>
    <IconBtn label="Закончить редактирование"><PostIco /></IconBtn>
    <IconBtn label="Переместить вверх"><ArrowBlue /></IconBtn>
    <IconBtn label="Переместить вниз"><ArrowBlue down /></IconBtn>
    <Sep />
    <IconBtn label="Обновить"><Refresh /></IconBtn>
    <Sep />
    <IconBtn label="Справка по таблице"><HelpIco /></IconBtn>
  </div>
);

const CELL = "border-r border-b border-[#c3cbd3] px-[4px] pt-px last:border-r-0";

const MovementsTable = () => (
  <div className="flex-1 overflow-hidden border border-[#a5a38e] bg-white">
    <table className="w-full table-fixed border-separate border-spacing-0 text-black">
      <colgroup>
        <col className="w-[24px]" />
        {COLUMNS.slice(0, -1).map((c) => (
          <col key={c} className="w-[153px]" />
        ))}
        <col />
      </colgroup>
      <thead>
        <tr className="h-[21px] bg-linear-to-b from-[#fdfbec] to-[#ece6c8] text-left text-[#4a4110]">
          <th aria-label="Состояние" className="border-r border-b border-[#bdb68f]" />
          {COLUMNS.map((c) => (
            <th
              key={c}
              scope="col"
              className="border-r border-b border-[#bdb68f] px-[4px] font-normal whitespace-nowrap last:border-r-0"
            >
              {c}
            </th>
          ))}
        </tr>
      </thead>
      <tbody>
        {ROWS.map((r, i) => (
          <tr key={i} className="h-[19px]">
            <td
              className={
                i === 0 ? "border border-dotted border-[#dfe3f5] bg-[#4460bd]" : "border-r border-b border-[#c3cbd3]"
              }
            >
              <svg width="8" height="8" viewBox="0 0 8 8" aria-label="Приход" className="mx-auto block">
                <path d="M4 0v8M0 4h8" stroke={i === 0 ? "#2f6e5c" : "#4a9a3c"} strokeWidth="2" />
              </svg>
            </td>
            <td className={CELL}>Приход</td>
            <td className={CELL}>
              <svg width="12" height="9" viewBox="0 0 12 9" aria-label="Да" className="block">
                <path d="M2.500 3.500l2.300 3.500L9.500 1.500" stroke="#1c1c1c" strokeWidth="2" fill="none" />
              </svg>
            </td>
            <td className={CELL}>
              <div className="flex h-[14px] items-center justify-between overflow-hidden">
                <Marks d={r.person} />
                <span>{r.dots}</span>
              </div>
            </td>
            <td className={CELL}>
              <div className="h-[14px] overflow-hidden">
                <Marks d={r.org} />
              </div>
            </td>
            <td className={CELL}>13%</td>
            <td className={CELL}>01.12.2013</td>
            <td className={CELL}>75401000000/744701001</td>
            <td className={CELL} />
            <td className={`${CELL} text-right`}>{r.sum}</td>
          </tr>
        ))}
      </tbody>
    </table>
  </div>
);

const WindowTabs = () => (
  <div className="flex h-[22px] shrink-0 gap-px border-t-2 border-[#fbf8e4] pr-[10px] pl-[2px]">
    {WINDOW_TABS.map((t, i) => (
      <button
        key={i}
        type="button"
        className={
          t.active
            ? "flex min-w-0 flex-1 items-center gap-px bg-[#b9cde8] pl-[2px] whitespace-nowrap text-[#1d2430]"
            : "flex min-w-0 flex-1 items-center gap-px bg-[#b2b1aa] pl-[2px] whitespace-nowrap text-[#1d1d1d]"
        }
      >
        {t.icon}
        {t.text}
      </button>
    ))}
  </div>
);

const Taskbar = () => (
  <footer className="flex h-[31px] shrink-0 items-stretch bg-linear-to-b from-[#1c4fc4] via-[#2b63e0] via-20% to-[#2252c8] text-[11px] text-white">
    <button
      type="button"
      className="flex w-[96px] items-center gap-[4px] rounded-r-[10px] bg-linear-to-b from-[#5eac56] via-[#3c8f3a] via-30% to-[#2f7d30] pl-[10px] text-[17px] font-bold italic"
    >
      <WinFlag />
      пуск
    </button>
    <div className="flex items-center pl-[8px]">
      <IconBtn label="Рабочий стол"><DesktopIco /></IconBtn>
      <IconBtn label="1С"><OneC size={15} /></IconBtn>
      <IconBtn label="The Bat"><BatIco /></IconBtn>
      <IconBtn label="Internet Explorer"><IeIco /></IconBtn>
      <IconBtn label="Chrome"><ChromeIco /></IconBtn>
      <IconBtn label="Excel"><ExcelIco /></IconBtn>
      <IconBtn label="Word"><WordIco /></IconBtn>
      <IconBtn label="Firefox"><FirefoxIco /></IconBtn>
      <IconBtn label="Файловый менеджер"><CommanderIco /></IconBtn>
    </div>
    <div className="flex flex-1 items-center gap-[2px] pl-[20px]">
      {TASKS.map((t) => (
        <button
          key={t.text}
          type="button"
          className={
            t.active
              ? "flex h-[24px] w-[158px] items-center gap-[3px] rounded-[2px] bg-[#1c4bb0] pl-[9px] whitespace-nowrap"
              : "flex h-[24px] w-[158px] items-center gap-[3px] rounded-[2px] bg-linear-to-b from-[#5a94f8] via-[#3b7bf0] via-20% to-[#3876ec] pl-[9px] whitespace-nowrap"
          }
        >
          {t.icon}
          <span>{t.text}</span>
          {t.group && (
            <svg width="6" height="3" viewBox="0 0 6 3" aria-hidden="true" className="mr-[4px] ml-auto">
              <path d="M0 0h6L3 3z" fill="#fff" />
            </svg>
          )}
        </button>
      ))}
      <span className="mr-[12px] ml-auto">RL</span>
    </div>
    <div className="relative flex w-[165px] items-center gap-[2px] border-l border-[#0f5fb8] bg-linear-to-b from-[#1390ea] via-[#18a0f2] via-30% to-[#1088dd] pl-[10px]">
      <span className="absolute top-[7px] -left-[9px]">
        <TrayArrow />
      </span>
      <TrayShield />
      <span className="px-px">
        <TrayMail />
      </span>
      <OutlookIco />
      <span className="bg-[#10186f] px-px text-[12px]">Ru</span>
      <TrayNet />
      <TrayEye />
      <time className="ml-auto pr-[16px]">9:26</time>
    </div>
  </footer>
);

export default function App() {
  return (
    <div className="flex h-screen flex-col overflow-hidden bg-[#f4f0de] font-['Liberation_Sans',sans-serif] text-[11px] leading-[14px] text-[#2e2a08]">
      <TitleBar />
      <MenuBar />
      <MainToolbar />
      <FunctionToolbar />
      <main className="mr-[2px] ml-px flex min-h-0 flex-1 flex-col border-l border-[#77756c]">
        <DocTitle />
        <div className="flex h-[25px] shrink-0 items-center gap-[8px] border-b border-[#a7a48b] bg-[#f4f1dc] pl-[5px]">
          <button type="button">Настройка...</button>
          <button type="button" aria-label="Справка по форме">
            <HelpIco />
          </button>
        </div>
        <section className="flex min-h-0 flex-1 flex-col bg-[#fffcee] px-[8px] pt-[9px] pb-[8px]">
          <label className="mb-[5px] flex items-center gap-[2px] pl-[6px]">
            <span className="grid size-[13px] place-items-center">
              <input
                type="checkbox"
                defaultChecked
                className="peer col-start-1 row-start-1 size-[13px] appearance-none rounded-[2px] border border-[#8d8a78] bg-white"
              />
              <svg
                width="9"
                height="9"
                viewBox="0 0 9 9"
                aria-hidden="true"
                className="pointer-events-none col-start-1 row-start-1 hidden peer-checked:block"
              >
                <path d="M1 4l2.500 3L8 1.500" stroke="#222" strokeWidth="2" fill="none" />
              </svg>
            </span>
            Ручная корректировка (разрешает редактирование движений документа)
          </label>
          <DocTabs />
          <div role="tabpanel" className="flex min-h-0 flex-1 flex-col border border-[#a7a48b] px-[6px] pb-[6px]">
            <TableToolbar />
            <MovementsTable />
          </div>
        </section>
        <div className="flex h-[26px] shrink-0 items-center justify-end border-t border-[#a7a48b]">
          <button type="button" className="px-[5px]">Отчет по движениям документа</button>
          <Sep />
          <button type="button" className="px-[5px] text-[12px] font-bold">OK</button>
          <Sep />
          <button type="button" className="px-[5px]">Закрыть</button>
        </div>
      </main>
      <WindowTabs />
      <div className="flex h-[21px] shrink-0 items-center border-t-2 border-[#fbf8e4] bg-[#f3f0dc] pl-[5px]">
        <span className="flex-1">Для получения подсказки нажмите F1</span>
        <span className="mr-[3px] border border-[#d9d4bb] px-[3px] text-[#99957d]">CAP</span>
        <span className="border border-[#d9d4bb] px-[3px]">NUM</span>
      </div>
      <Taskbar />
    </div>
  );
}
